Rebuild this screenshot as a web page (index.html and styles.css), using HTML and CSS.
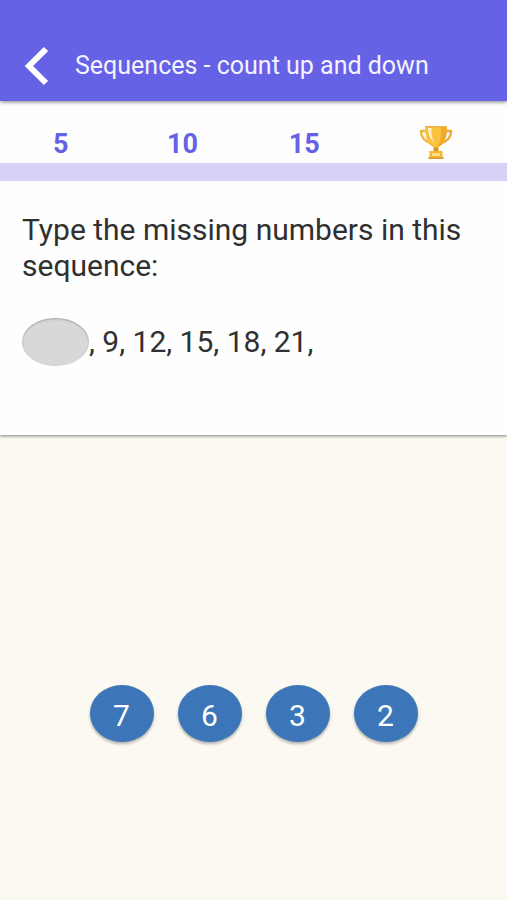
FILE: index.html
```html
<!DOCTYPE html>
<html lang="en">
<head>
  <meta charset="UTF-8" />
  <meta name="viewport" content="width=device-width, initial-scale=1.0" />
  <title>Sequences - count up and down</title>
  <link rel="stylesheet" href="styles.css">
</head>
<body>
  <header class="top-bar">
    <button class="back-btn" type="button" aria-label="Back">
      <svg width="26" height="40" viewBox="0 0 26 40">
        <path d="M22 3 L5 20 L22 37" fill="none" stroke="#fff" stroke-width="6" />
      </svg>
    </button>
    <h1>Sequences - count up and down</h1>
  </header>

  <main>
    <section class="panel">
      <div class="marks">
        <span>5</span>
        <span>10</span>
        <span>15</span>
        <span class="trophy">
          <svg width="34" height="34" viewBox="0 0 34 34" role="img" aria-label="Trophy">
            <path d="M8 6 H2 Q2 15 12 18.500" fill="none" stroke="#f0b545" stroke-width="2.4" />
            <path d="M26 6 H32 Q32 15 22 18.500" fill="none" stroke="#ecac3c" stroke-width="2.4" />
            <path d="M6 1 H28 C28 12 26 19 19 22.500 V26 H15 V22.500 C8 19 6 12 6 1 Z" fill="#f8c23c" />
            <path d="M22 2 H28 C28 12 26 19 18 22.500 C22 17 22.500 9 22 2 Z" fill="#efa92f" />
            <path d="M9 3 H12.500 C12 9 13 14 15.500 18 C11 14 9 9 9 3 Z" fill="#fff0c4" />
            <path d="M6 1 H28 V2.500 H6 Z" fill="#eeb047" />
            <path d="M14.500 22.500 H19.500 V26 H14.500 Z" fill="#d9922b" />
            <path d="M10.500 26 H23.500 V32 H24.500 V34 H9.500 V32 H10.500 Z" fill="#f3b637" />
            <path d="M13 28 H21 V31 H13 Z" fill="#ffdf86" />
            <path d="M9.500 32.500 H24.500 V34 H9.500 Z" fill="#dc9634" />
          </svg>
        </span>
      </div>
      <div class="progress"></div>
      <div class="question">
        <p>Type the missing numbers in this sequence:</p>
        <p class="sequence"><input class="blank" type="text" aria-label="Missing number" readonly /><span>, 9, 12, 15, 18, 21,</span></p>
      </div>
    </section>

    <div class="choices">
      <button type="button">7</button>
      <button type="button">6</button>
      <button type="button">3</button>
      <button type="button">2</button>
    </div>
  </main>
</body>
</html>
```

FILE: styles.css
```css
:root {
  --purple: #6562e5;
  --light-purple: #d9d0f6;
  --blue: #3c76b9;
  --page-bg: #fcf9f2;
  --text-color: #303030;
}

* {
  box-sizing: border-box;
}

body {
  margin: 0;
  min-height: 100vh;
  font-family: Roboto, "Liberation Sans", sans-serif;
  background-color: var(--page-bg);
  color: var(--text-color);
}

h1, p {
  margin: 0;
}

button {
  border: none;
  font-family: inherit;
  cursor: pointer;
}

.top-bar {
  position: relative;
  display: flex;
  align-items: center;
  gap: 25px;
  padding: 40px 24px 9px;
  background-color: var(--purple);
  box-shadow: 0 1px 4px rgba(0, 0, 0, 0.5);
}
.top-bar h1 {
  color: #f4f3ff;
  font-size: 25px;
  font-weight: 400;
  line-height: 52px;
}
.back-btn {
  display: flex;
  padding: 0;
  background: none;
}

.panel {
  background-color: #fefefe;
  box-shadow: 0 1px 3px rgba(0, 0, 0, 0.5);
}
.marks {
  display: grid;
  grid-template-columns: 24% 24% 24% 1fr;
  padding-top: 24px;
  color: var(--purple);
  font-size: 27px;
  font-weight: 700;
  line-height: 38px;
  text-align: center;
}
.trophy {
  display: flex;
  justify-content: center;
}
.progress {
  height: 18px;
  background-color: var(--light-purple);
}
.question {
  padding: 31px 22px 69px;
  font-size: 30px;
  line-height: 36px;
}
.sequence {
  display: flex;
  align-items: center;
  margin-top: 34px;
}
.blank {
  width: 67px;
  height: 48px;
  padding: 0 12px;
  border: none;
  border-radius: 50%;
  background-color: #d8d8d8;
  box-shadow: inset 0 1px 2px rgba(0, 0, 0, 0.25);
  font: inherit;
  text-align: center;
}

.choices {
  display: flex;
  justify-content: center;
  gap: 24px;
  padding: 250px 16px 40px;
}
.choices button {
  width: 64px;
  height: 57px;
  padding: 4px 0 0;
  border-radius: 50%;
  background-color: var(--blue);
  box-shadow: 0 2px 3px rgba(0, 0, 0, 0.3);
  color: #fff;
  font-size: 30px;
}
```
